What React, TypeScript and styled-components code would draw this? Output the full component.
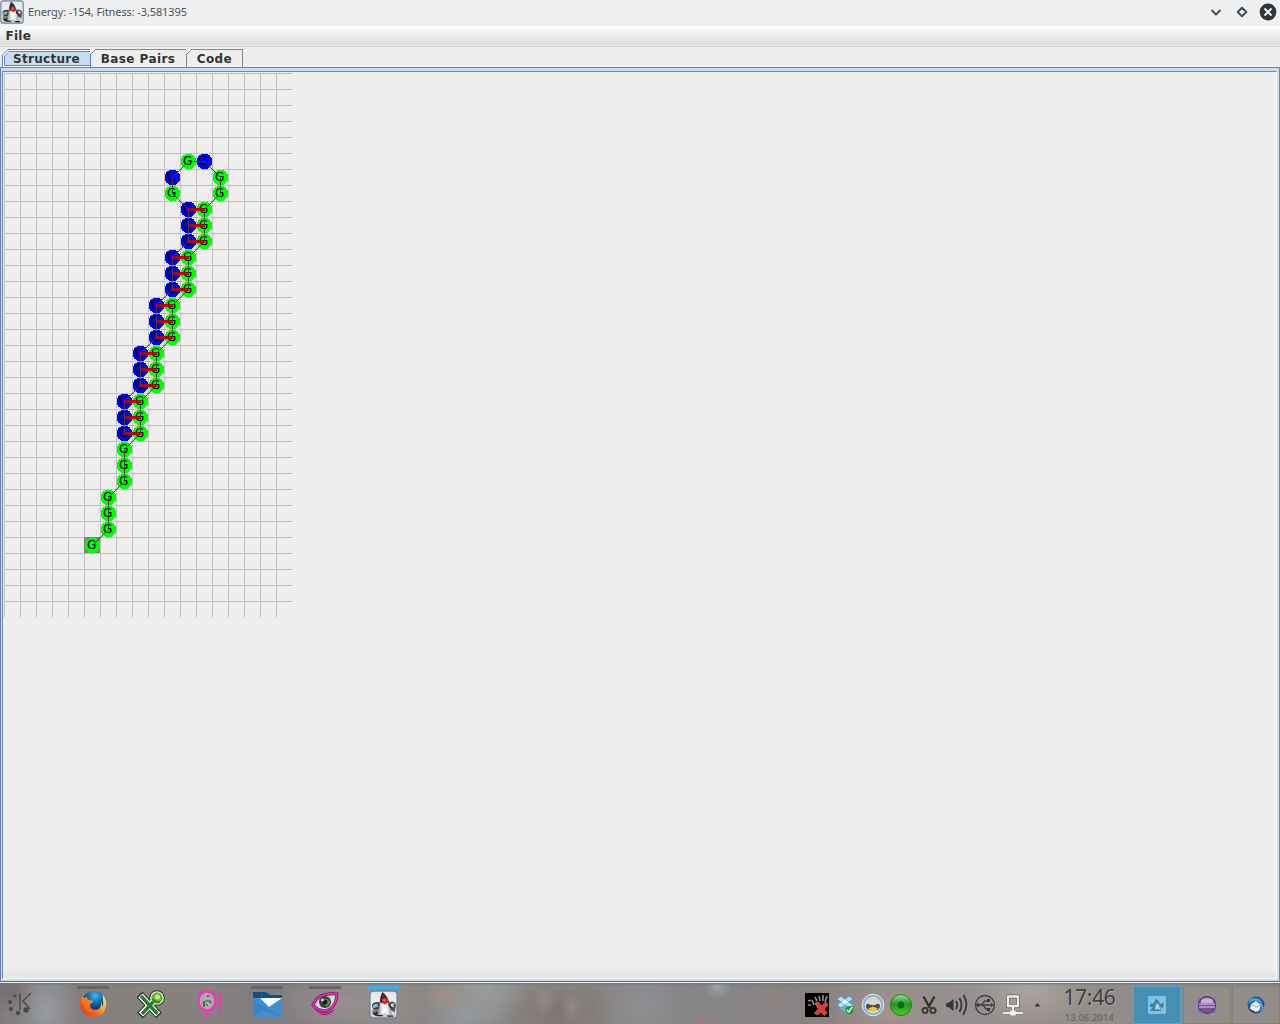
import React from "react";
import styled, { createGlobalStyle } from "styled-components";

const Global = createGlobalStyle`
  body { margin: 0; background: #eee; overflow: hidden; }
  * { box-sizing: border-box; }
  svg { display: block; flex: none; }
`;

const Screen = styled.div`
  width: 1280px; height: 1024px; display: flex; flex-direction: column;
  font-family: "DejaVu Sans", sans-serif; background: #eee;
`;
const TitleBar = styled.header`
  height: 26px; flex: none; display: flex; align-items: center; background: #eff0f1; padding-bottom: 2px;
`;
const Title = styled.span`
  flex: 1; margin-left: 4px; padding-bottom: 2px; white-space: nowrap; color: #4d5155;
  font: 11px "Noto Sans", sans-serif; letter-spacing: -0.11px;
`;
const WindowControls = styled.div`
  display: flex; gap: 8px; padding-right: 3px;
`;
const MenuBar = styled.nav`
  height: 21px; flex: none; padding: 1px 6px 0 5.5px; color: #333;
  background: linear-gradient(#fff, #dadada 19px, #eee 19px, #eee 20px, #ccc 20px);
  font: bold 12px/18px "DejaVu Sans", sans-serif; letter-spacing: 0.25px;
`;
const TabRow = styled.div`
  height: 20px; flex: none; display: flex; padding: 2px 0 0 2px; position: relative;
`;
const Tab = styled.div<{ $w: number; $active?: boolean }>`
  position: relative; width: ${p => p.$w}px; height: 18px; flex: none;
  padding-left: ${p => (p.$active ? 10 : 9.7)}px; white-space: nowrap; color: #333;
  border-top: 1px solid ${p => (p.$active ? "#6382bf" : "#7a8a99")};
  border-right: 1px solid ${p => (p.$active ? "#6382bf" : "#7a8a99")};
  font: bold 12px/19px "DejaVu Sans", sans-serif; letter-spacing: ${p => (p.$active ? 0.3 : 0.42)}px;
  ${p => p.$active && `
    background: linear-gradient(#fff 1px, #6382bf 1px, #6382bf 2px, #c8ddf2 2px, #c8ddf2 15px, #6382bf 15px, #6382bf 16px, #fff 16px);
    border-left: 1px solid #6382bf;
  `}
`;
const Corner = styled.svg`
  position: absolute; left: -1px; top: -1px;
`;
const Pane = styled.main`
  height: 915px; flex: none; border: 1px solid #6382bf; border-right-color: #7a8a99; border-bottom-color: #55697c;
  background: #c8ddf2; padding: 3px 2px 2px 1px;
`;
const PaneInner = styled.div`
  height: 100%; border: 1px solid #7a8a99; border-right-color: #fff; border-bottom-color: #fff;
  background: linear-gradient(#eee 895px, #e4e4e4); padding: 1px 0 0 1px;
`;

const Taskbar = styled.footer`
  height: 42px; flex: none; display: flex; align-items: center; border-top: 1px solid #f4f4f4;
  box-shadow: inset 0 1px 2px #707073;
  background:
    radial-gradient(ellipse 32px 46px at 46px 28px, #979ca3, transparent),
    radial-gradient(ellipse 34px 22px at 8px 8px, #747070, transparent),
    radial-gradient(ellipse 46px 34px at 485px 6px, #9b9d9b, transparent),
    radial-gradient(ellipse 20px 16px at 443px 13px, #a18f84, transparent),
    radial-gradient(ellipse 40px 36px at 466px 34px, #92999d, transparent),
    radial-gradient(ellipse 12px 16px at 545px 18px, rgba(160,144,138,.65), transparent),
    radial-gradient(ellipse 12px 16px at 572px 25px, rgba(156,150,144,.55), transparent),
    radial-gradient(ellipse 60px 32px at 558px 28px, #80746f, transparent),
    radial-gradient(ellipse 8px 6px at 700px 40px, rgba(176,121,106,.7), transparent),
    radial-gradient(ellipse 10px 7px at 768px 10px, rgba(164,130,112,.6), transparent),
    radial-gradient(ellipse 14px 12px at 718px 4px, rgba(172,180,188,.6), transparent),
    radial-gradient(ellipse 48px 46px at 642px 22px, #8f8f93, transparent),
    radial-gradient(ellipse 60px 40px at 890px 28px, #a3938d, transparent),
    radial-gradient(ellipse 60px 34px at 1030px 8px, #aca39e, transparent),
    radial-gradient(ellipse 80px 34px at 350px 20px, #989090, transparent),
    linear-gradient(90deg, #827e7d, #88827f 16%, #7e7c7e 21%, #8c8684 30%, #8b8887 38%, #878383 48%, #868486 57%, #8b8180 64%, #979090 75%, #948d8a 85%, #8d8786);
`;
const Launcher = styled.div`
  width: 64px; padding-left: 6px;
`;
const TaskSlot = styled.div<{ $mark?: string }>`
  width: 58px; height: 100%; display: flex; align-items: center; justify-content: center; padding-top: 1px;
  background: linear-gradient(${p => p.$mark ?? "transparent"}, ${p => p.$mark ?? "transparent"}) 13px 3px / 32px 3px no-repeat;
`;
const Tray = styled.div`
  display: flex; margin-left: auto; align-items: center; padding-top: 2px;
`;
const TrayItem = styled.div`
  width: 28px; display: flex; justify-content: center;
`;
const Clock = styled.time`
  width: 85px; height: 40px; padding-right: 2px; text-align: center; color: #3d4145;
  text-shadow: 1px 1px 0 #aaa6a5; font: 21px/25px "Noto Sans", sans-serif; letter-spacing: -0.3px; padding-top: 1px;
`;
const ClockDate = styled.div`
  color: #5d5c5d; font: 9px/12px "Noto Sans", sans-serif; letter-spacing: 0.28px; text-shadow: none; margin-top: 2px;
`;
const Pager = styled.div`
  display: grid; grid-template-columns: 48px 48px 48px; gap: 1.5px; height: 38px; align-self: flex-end;
`;
const Desktop = styled.div<{ $active?: boolean }>`
  display: flex; align-items: center; justify-content: center;
  border: 1px solid ${p => (p.$active ? "#55a3c8" : "#857e79")};
  background: ${p => (p.$active ? "#478eb5" : "rgba(155,148,148,.3)")};
`;

function DukeIcon({ size }: { size: number }) {
  return (
    <svg width={size} height={size} viewBox="0 0 30 30">
      <defs>
        <linearGradient id="dukeBack" x2="0" y2="1"><stop stopColor="#dfe3e9" /><stop offset=".5" stopColor="#f2f3f5" /><stop offset="1" stopColor="#c3cad2" /></linearGradient>
        <linearGradient id="dukeBody"><stop stopColor="#8f8f8f" /><stop offset=".4" stopColor="#fff" /><stop offset=".7" stopColor="#eee" /><stop offset="1" stopColor="#a5a5a5" /></linearGradient>
      </defs>
      <rect x="1" y="1" width="28" height="28" rx="3.5" fill="url(#dukeBack)" stroke="#71869b" strokeWidth="1.5" />
      <path d="M3 15Q5 11 12 13L12 20L6 21Q3 19 3 15Z" fill="#3c4247" />
      <path d="M4 15.5L9 14V17.5L4.5 18.5Z" fill="#9cb5cf" />
      <path d="M4 20L12 20L14 26L7 27L3 24Z" fill="#817d74" />
      <path d="M4 24L12 21.5L11 26.5H6Z" fill="#292929" />
      <path d="M20 13Q26 10 28 15L26.5 23L21 20Z" fill="#55585b" />
      <path d="M22.5 14.5L26 13.5L25 19L23 18Z" fill="#d2cec8" />
      <path d="M14 3Q11 9 11 15L9 25Q10 28 16 24.5Q21 28 23 25.5Q22.5 17 19.5 11Q18 5 14 3Z" fill="url(#dukeBody)" stroke="#777" strokeWidth=".5" />
      <path d="M14 2Q11 7 11.5 13L16 14L21 13Q19 6 14 2Z" fill="#303134" />
      <circle cx="16.5" cy="11.5" r="3.2" fill="#e52328" /><circle cx="15.7" cy="10.5" r="1" fill="#ff7777" />
      <path d="M20.5 14Q21 18 25 19" fill="none" stroke="#2d2d2d" strokeWidth="1.6" />
      <path d="M8 26.5H14M19 27H25" stroke="#222" strokeWidth="1.4" />
    </svg>
  );
}

const Firefox = () => (
  <svg width="28" height="28" viewBox="0 0 28 28">
    <defs>
      <radialGradient id="foxGlobe" cx=".55" cy=".2"><stop stopColor="#45b8eb" /><stop offset=".6" stopColor="#126dae" /><stop offset="1" stopColor="#143f7d" /></radialGradient>
      <linearGradient id="foxTail" x1="1" x2="0" y2="1"><stop stopColor="#fff19c" /><stop offset=".35" stopColor="#ffb02d" /><stop offset=".65" stopColor="#ef5d1e" /><stop offset="1" stopColor="#d93519" /></linearGradient>
    </defs>
    <circle cx="15" cy="13" r="12" fill="url(#foxGlobe)" />
    <path d="M23 4Q28 9 27 16Q25 27 14 27Q1 26 1 14Q1 9 4 6L5 8L8 7Q8 10 10 10L14 11Q14 13 11 14Q11 20 17 20Q23 19 22 12Q24 14 23 17Q25 14 24 10Q24 6 23 4Z" fill="url(#foxTail)" />
    <path d="M4 6L4 10L8 9L9 13L13 12L11 14L8 17L12 20L17 20L13 22Q6 21 5 15Q2 12 4 6Z" fill="#f37522" opacity=".8" />
  </svg>
);
const GreenX = () => (
  <svg width="28" height="28" viewBox="0 0 28 28">
    <g fill="none" strokeLinecap="butt">
      <path d="M2.5 4.5L22 25.5M3 25.5L17 11" stroke="#26312a" strokeWidth="8" />
      <circle cx="20" cy="8" r="7.8" fill="#26312a" />
      <path d="M3.5 5.5L21 24.5M4 24.5L17 11" stroke="#fff" strokeWidth="6" />
      <circle cx="20" cy="8" r="6.8" fill="#f2f8ed" />
      <path d="M4 6L20.5 24M5 24L17 11" stroke="#277b2b" strokeWidth="3.4" />
    </g>
    <circle cx="20" cy="8" r="5.7" fill="#62b62c" /><circle cx="20.5" cy="7" r="2.5" fill="#c5e7a0" /><path d="M15.5 9Q18 13 23 12" fill="none" stroke="#257d25" strokeWidth="1.5" />
  </svg>
);
const PinkBalloon = () => (
  <svg width="28" height="28" viewBox="0 0 28 28">
    <ellipse cx="12" cy="11" rx="8.7" ry="9.6" fill="#a9adad" stroke="#e83cb2" strokeWidth="2.8" />
    <path d="M12 20V27M9.5 24H14.5" stroke="#e83cb2" strokeWidth="1.8" />
    <path d="M8 11L9 17L10 11H16M12 7L13 5L15 7M11 14L13 16M14 12L17 13" fill="none" stroke="#4b5051" strokeWidth="1" />
    <path d="M23.5 3H27L26 18.5H24Z" fill="#e83cb2" /><circle cx="25" cy="22.5" r="1.7" fill="#e83cb2" />
  </svg>
);
const MailFolder = () => (
  <svg width="30" height="28" viewBox="0 0 30 28">
    <path d="M1 2H14L18 5H30V25H1Z" fill="#155083" />
    <path d="M1 8H30V27H1Z" fill="#3e8fd2" /><path d="M1 10L30 27H1Z" fill="#347fc3" opacity=".65" />
    <path d="M8 8H30L17 17Z" fill="#f7f8f9" /><path d="M1 27L10 20L30 27Z" fill="#4b98d9" opacity=".5" />
  </svg>
);
const EyeIcon = () => (
  <svg width="28" height="28" viewBox="0 0 28 28">
    <path d="M2 15Q7 2 26 4Q25 19 13 21Q6 20 2 15Z" fill="#d4deda" stroke="#8a0865" strokeWidth="3" />
    <path d="M2 15Q7 2 26 4Q25 19 13 21Q6 20 2 15Z" fill="none" stroke="#ec36b1" strokeWidth="1.5" />
    <circle cx="14" cy="12" r="6" fill="#34433b" /><path d="M12 9Q18 8 19 13L15 17Z" fill="#68943e" /><circle cx="14" cy="12" r="2.5" fill="#151a22" /><circle cx="11.5" cy="10" r="1.6" fill="#c5d1e4" />
    <path d="M4 19Q13 30 23 20Q15 25 8 21Z" fill="#e635a9" stroke="#970b70" strokeWidth=".8" />
  </svg>
);
const trayIcons: React.ReactNode[] = [
  <svg width="24" height="24" viewBox="0 0 24 24"><path fill="#000" d="M0 0H24V24H0Z" /><path d="M3 8L6 7M3 12L6 12M7 7L9 12M10 4L12 8M14 3L15 8M18 2L18 8M22 3L20 9" stroke="#8b8b8b" strokeWidth="1.7" /><path d="M10 10L13 9L16.5 13L21 9L23 12L19 16L22 20L19 22.5L16 19L12 22L9.5 20L13.5 16Z" fill="#d93a3c" stroke="#f08a8a" strokeWidth=".6" /></svg>,
  <svg width="18" height="20" viewBox="0 0 18 20"><path d="M5 1L9 4L5 7L1 4ZM13 1L17 4L13 7L9 4ZM5 7L9 10L5 13L1 10ZM13 7L17 10L13 13L9 10Z" fill="#b5e0f8" stroke="#3c9fdb" /><path d="M9 4L13 7L9 10L5 7Z" fill="#e9f6fd" /><path d="M4 13.5L9 11L14 13.5L9 17Z" fill="#58b6ea" /><circle cx="13.5" cy="15" r="4" fill="#269c33" /><path d="M11 15L13 17L16 12" stroke="#fff" fill="none" strokeWidth="1.3" /></svg>,
  <svg width="24" height="24" viewBox="0 0 24 24"><circle cx="12" cy="12" r="10.8" fill="#8fb0d2" stroke="#dfe9f2" strokeWidth="1" /><circle cx="12" cy="12" r="8.2" fill="#d5d6d4" /><path d="M5 14Q5 9 9 11.5Q12 13 15 11.5Q19 9 19 14L17 17H7Z" fill="#4b4d4e" /><path d="M7 15.5L12 13.5L17 15.5Q15 18.5 12 18.5Q9 18.5 7 15.5Z" fill="#e9c53c" /></svg>,
  <svg width="24" height="24" viewBox="0 0 24 24"><defs><linearGradient id="greenDisc" x2="0" y2="1"><stop stopColor="#a5dc95" /><stop offset=".45" stopColor="#219620" /><stop offset="1" stopColor="#4fd01f" /></linearGradient></defs><circle cx="12" cy="12" r="10.5" fill="url(#greenDisc)" stroke="#16851b" /><circle cx="12" cy="12" r="4" fill="#11691c" stroke="#48ad3c" strokeWidth=".7" /></svg>,
  <svg width="18" height="20" viewBox="0 0 18 20"><path d="M3.5 1.5L10 13M14.5 1.5L8 13" stroke="#303539" strokeWidth="2.4" /><circle cx="5" cy="15.5" r="2.6" fill="none" stroke="#303539" strokeWidth="1.8" /><circle cx="13" cy="15.5" r="2.6" fill="none" stroke="#303539" strokeWidth="1.8" /></svg>,
  <svg width="22" height="24" viewBox="0 0 22 24"><path d="M0 10.5L3 9.5L7.5 6V18L3 14.5L0 13.5Z" fill="#30363b" /><path d="M10 8Q12.5 12 10 16M13.5 5Q17.5 12 13.5 19M17.5 2Q23.5 12 17 22" fill="none" stroke="#343a3e" strokeWidth="1.9" /></svg>,
  <svg width="22" height="22" viewBox="0 0 22 22"><circle cx="11" cy="11" r="9.5" fill="none" stroke="#3c4145" strokeWidth="1.3" /><path d="M3 11H18M7 11L11 7H15M9 11L12 15H15" fill="none" stroke="#3c4145" strokeWidth="1.3" /><circle cx="4" cy="11" r="1.8" fill="#34393e" /><path d="M13 5H16V8H13ZM13 14H16V17H13ZM17 9L20 11L17 13Z" fill="#34393e" /></svg>,
  <svg width="22" height="22" viewBox="0 0 22 22"><path d="M6 2.5H16V12H6ZM11 13V18M1 19H8M14 19H21" fill="none" stroke="#666" strokeWidth="4" /><path d="M6 2.5H16V12H6ZM11 13V18M1 19H21" fill="none" stroke="#eeeceb" strokeWidth="2.3" /><path d="M8.5 16.5H13.5V21.5H8.5Z" fill="#f5f3f2" /></svg>,
];

type Base = { x: number; y: number; letter: "G" | "C" };
const at = (letter: "G" | "C", x: number, y: number): Base => ({ letter, x, y });
const bases: Base[] = [at("G", 5, 29)];
for (let row = 28; row >= 8; row--) bases.push(at("G", 6 + Math.floor((28 - row) / 3), row));
bases.push(at("G", 13, 7), at("G", 13, 6), at("C", 12, 5), at("G", 11, 5), at("C", 10, 6), at("G", 10, 7));
for (let row = 8; row <= 22; row++) bases.push(at("C", 11 - Math.floor((row - 8) / 3), row));
const cx = (b: Base) => b.x * 16 + 8;
const cy = (b: Base) => b.y * 16 + 8;

function Structure() {
  return (
    <svg width="288" height="544" viewBox="0 0 288 544" fontFamily="DejaVu Sans, sans-serif" fontSize="12">
      <g fill="#c0c0c0" shapeRendering="crispEdges">
        {Array.from({ length: 18 }, (_, i) => <rect key={`v${i}`} x={i * 16} y="0" width="1" height="544" />)}
        {Array.from({ length: 34 }, (_, i) => <rect key={`h${i}`} x="0" y={i * 16} width="288" height="1" />)}
      </g>
      <rect x="80" y="464" width="16" height="16" fill="#808080" />
      {bases.map((b, i) => (
        <g key={i}>
          <circle cx={cx(b) + 0.4} cy={cy(b) + 0.4} r="7.9" fill={b.letter === "G" ? "#00ff00" : "#0000ff"} shapeRendering="crispEdges" />
          <text x={cx(b) - 5} y={cy(b) + 4} fill="#000">{b.letter}</text>
        </g>
      ))}
      <g fill="#b40000" shapeRendering="crispEdges">
        {bases.slice(28).map((b, i) => <rect key={i} x={cx(b)} width="17" y={cy(b) - 1} height="3" />)}
      </g>
      <g stroke="#404040" shapeRendering="crispEdges">
        {bases.slice(1).map((b, i) => <line key={i} x1={cx(bases[i]) + 0.5} y1={cy(bases[i]) + 0.5} x2={cx(b) + 0.5} y2={cy(b) + 0.5} />)}
      </g>
    </svg>
  );
}

const InactiveCorner = () => (
  <Corner width="7" height="7" viewBox="0 0 7 7"><path d="M0 0H6L0 6Z" fill="#eee" /><path d="M0 6L6 0" stroke="#7a8a99" /></Corner>
);

export default function App() {
  return (
    <Screen>
      <Global />
      <TitleBar>
        <DukeIcon size={24} />
        <Title>Energy: -154, Fitness: -3,581395</Title>
        <WindowControls>
          <svg width="18" height="18" viewBox="0 0 18 18"><path d="M4.5 7L9 11.5L13.5 7" fill="none" stroke="#475057" strokeWidth="2" /></svg>
          <svg width="18" height="18" viewBox="0 0 18 18"><path d="M9 4.7L13.3 9L9 13.3L4.7 9Z" fill="none" stroke="#475057" strokeWidth="2" strokeLinejoin="round" /></svg>
          <svg width="18" height="18" viewBox="0 0 18 18"><circle cx="9" cy="9" r="8.4" fill="#31363b" /><path d="M5.5 5.5L12.5 12.5M12.5 5.5L5.5 12.5" stroke="#eff0f1" strokeWidth="2" /></svg>
        </WindowControls>
      </TitleBar>
      <MenuBar>File</MenuBar>
      <TabRow>
        <Tab $w={89} $active>
          <Corner width="8" height="18" viewBox="0 0 8 18">
            <path d="M0 0H8V3H3V18H0Z" fill="#eee" /><path d="M1 18V6L6 1H8V18Z" fill="#fff" /><path d="M3 16V7L7 3H8V16Z" fill="#c8ddf2" />
            <path d="M.5 18V6L6 .5H8M2.5 16.5V7L7 2.5H8M2.5 16.5H8" fill="none" stroke="#6382bf" />
          </Corner>
          Structure
        </Tab>
        <Tab $w={96}><InactiveCorner />Base Pairs</Tab>
        <Tab $w={56}><InactiveCorner />Code</Tab>
      </TabRow>
      <Pane><PaneInner><Structure /></PaneInner></Pane>
      <Taskbar>
        <Launcher>
          <svg width="26" height="26" viewBox="0 0 26 26" fill="#4a4846"><path d="M14 2V19M25 2L17 10L24 18" fill="none" stroke="#4a4846" strokeWidth="1.4" /><circle cx="9" cy="5" r="1.5" /><circle cx="4" cy="11" r="2" /><circle cx="5" cy="18" r="2" /><circle cx="12" cy="22" r="2.2" /><circle cx="20" cy="19" r="2.7" /></svg>
        </Launcher>
        <TaskSlot $mark="#6a6665"><Firefox /></TaskSlot>
        <TaskSlot><GreenX /></TaskSlot>
        <TaskSlot><PinkBalloon /></TaskSlot>
        <TaskSlot $mark="#6a6665"><MailFolder /></TaskSlot>
        <TaskSlot $mark="#6a6665"><EyeIcon /></TaskSlot>
        <TaskSlot $mark="#3daee9"><DukeIcon size={29} /></TaskSlot>
        <Tray>
          {trayIcons.map((icon, i) => <TrayItem key={i}>{icon}</TrayItem>)}
          <svg width="21" height="8" viewBox="0 0 21 8"><path d="M7.5 5.5L10.5 2L13.5 5.5Z" fill="#34393d" /></svg>
        </Tray>
        <Clock>17:46<ClockDate>13.06.2014</ClockDate></Clock>
        <Pager>
          <Desktop $active>
            <svg width="18" height="18" viewBox="0 0 18 18"><rect width="18" height="18" rx="1.5" fill="#7fc3e3" /><path d="M2 8L6 7L8 2.5Q11 5 12 8L16 7L15 12L12 11L13 15H6L2 15L5 11L2 11Z" fill="#3b7e9d" /><path d="M8 7L11 8L12 14L9 13L7 14Z" fill="#a7d5e9" /><circle cx="10" cy="7" r="1.5" fill="#7c6e91" /></svg>
          </Desktop>
          <Desktop>
            <svg width="18" height="18" viewBox="0 0 18 18"><path d="M0 2H18V17H0Z" fill="#6481ad" /><circle cx="9" cy="9" r="8.5" fill="#775193" stroke="#4c3269" /><path d="M3 4Q9 0 15 4V7H3Z" fill="#c8acda" /><path d="M1 8H17M1 11H17" stroke="#e0d0e7" /></svg>
          </Desktop>
          <Desktop>
            <svg width="18" height="18" viewBox="0 0 18 18"><circle cx="9" cy="9" r="8.5" fill="#195497" /><path d="M3 3Q12 0 15 7L17 12L13 16Q17 8 10 5Q5 4 1 9Z" fill="#48a5d6" /><path d="M4 8L9 5L14 9L12 15Q6 17 3 13Z" fill="#ededeb" /><path d="M4 8L9 11L14 9" fill="none" stroke="#a0a5aa" /><path d="M2 12L8 16L6 17Z" fill="#292d45" /></svg>
          </Desktop>
        </Pager>
      </Taskbar>
    </Screen>
  );
}
